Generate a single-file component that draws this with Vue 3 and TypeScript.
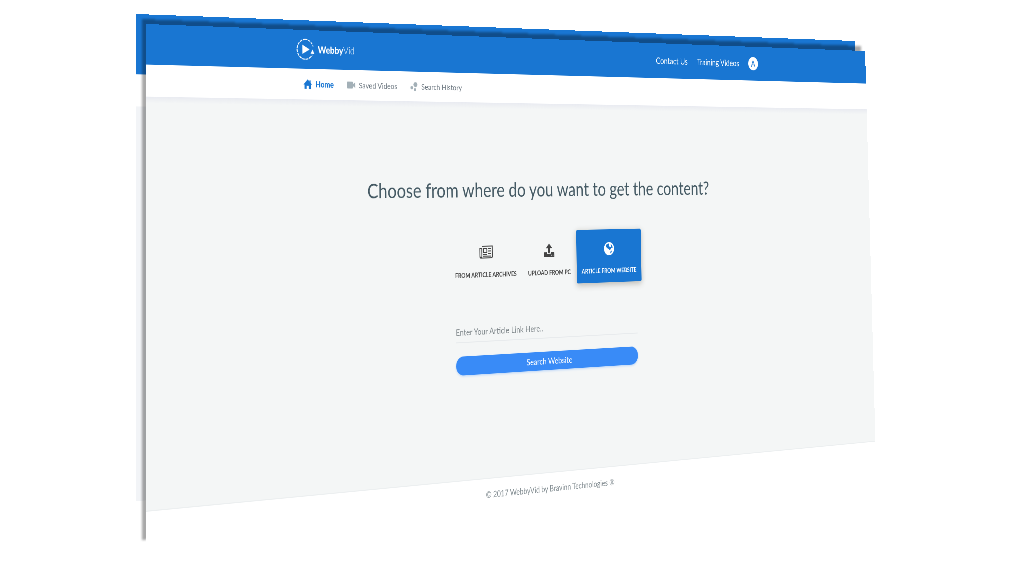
<script setup lang="ts">
import { onBeforeUnmount, onMounted, ref } from 'vue'

type Point = [number, number]

interface NavItem {
  label: string
  icon: 'home' | 'video' | 'history'
}
interface Source {
  id: 'archive' | 'upload' | 'website'
  label: string
}

const navItems: NavItem[] = [
  { label: 'Home', icon: 'home' },
  { label: 'Saved Videos', icon: 'video' },
  { label: 'Search History', icon: 'history' },
]
const sources: Source[] = [
  { id: 'archive', label: 'FROM ARTICLE ARCHIVES' },
  { id: 'upload', label: 'UPLOAD FROM PC' },
  { id: 'website', label: 'ARTICLE FROM WEBSITE' },
]
const activeSource = ref<Source['id']>('website')
const link = ref('')

// Corners of the tilted page as shares of the window: top left, top right, bottom right, bottom left.
const corners: Point[] = [
  [146 / 1024, 24 / 576],
  [865 / 1024, 51 / 576],
  [876 / 1024, 468 / 576],
  [146 / 1024, 545 / 576],
]

const stage = ref<HTMLElement | null>(null)
const page = ref<HTMLElement | null>(null)
const planeTransform = ref('none')

// Projects a w × h rectangle onto the four corner points.
function project(w: number, h: number, pts: Point[]): string {
  const [[x0, y0], [x1, y1], [x2, y2], [x3, y3]] = pts
  const dx1 = x1 - x2
  const dx2 = x3 - x2
  const dx3 = x0 - x1 + x2 - x3
  const dy1 = y1 - y2
  const dy2 = y3 - y2
  const dy3 = y0 - y1 + y2 - y3
  const den = dx1 * dy2 - dx2 * dy1
  const g = (dx3 * dy2 - dx2 * dy3) / den
  const k = (dx1 * dy3 - dx3 * dy1) / den
  const m = [
    (x1 - x0 + g * x1) / w, (y1 - y0 + g * y1) / w, 0, g / w,
    (x3 - x0 + k * x3) / h, (y3 - y0 + k * y3) / h, 0, k / h,
    0, 0, 1, 0,
    x0, y0, 0, 1,
  ]
  return `matrix3d(${m.map((n) => n.toFixed(10)).join(',')})`
}

function update() {
  if (!stage.value || !page.value) return
  const sw = stage.value.clientWidth
  const sh = stage.value.clientHeight
  const pts = corners.map(([x, y]): Point => [x * sw, y * sh])
  planeTransform.value = project(page.value.offsetWidth, page.value.offsetHeight, pts)
}

onMounted(() => {
  update()
  window.addEventListener('resize', update)
})
onBeforeUnmount(() => window.removeEventListener('resize', update))
</script>

<template>
  <div ref="stage" class="stage">
    <div class="layer layer-back" aria-hidden="true">
      <div class="plane" :style="{ transform: planeTransform }">
        <div class="back-header"></div>
        <div class="back-nav"></div>
        <div class="back-body"></div>
        <div class="back-footer"></div>
      </div>
    </div>

    <div class="layer layer-front">
      <div ref="page" class="plane" :style="{ transform: planeTransform }">
        <header class="header">
          <div class="container header-row">
            <a class="brand" href="#">
              <svg class="brand-mark" viewBox="0 0 42 42" aria-hidden="true">
                <path d="M21 1.5A19.5 19.5 0 0 0 21 40.5" fill="none" stroke="#fff" stroke-width="2.2" stroke-dasharray="6 1.6" />
                <path d="M21 1.5A19.5 19.5 0 0 1 39 15" fill="none" stroke="#fff" stroke-width="1.8" stroke-dasharray="5 2" />
                <path d="M21 40.5A19.5 19.5 0 0 0 37 31" fill="none" stroke="#fff" stroke-width="2.2" stroke-dasharray="7 2" />
                <path d="M38 21l4 9-9-1z" fill="#fff" />
                <path d="M14 12v18l17-9z" fill="#fff" />
              </svg>
              <span class="brand-name"><b>Webby</b>Vid</span>
            </a>
            <div class="account">
              <a href="#">Contact Us</a>
              <a href="#">Training Videos</a>
              <button class="avatar" type="button" aria-label="Account">A</button>
            </div>
          </div>
        </header>

        <nav class="nav">
          <div class="container nav-row">
            <a
              v-for="(item, i) in navItems"
              :key="item.label"
              href="#"
              class="nav-link"
              :class="{ active: i === 0 }"
            >
              <svg v-if="item.icon === 'home'" class="nav-icon" viewBox="0 0 24 24" aria-hidden="true">
                <path d="M12 1L0 13h3v10h6v-7h6v7h6V13h3l-4-4V3h-3v3z" fill="#1976d2" />
              </svg>
              <svg v-else-if="item.icon === 'video'" class="nav-icon" viewBox="0 0 24 24" aria-hidden="true">
                <path d="M2 4h13a2 2 0 0 1 2 2v4l7-5v14l-7-5v4a2 2 0 0 1-2 2H2a2 2 0 0 1-2-2V6a2 2 0 0 1 2-2z" fill="#a3b0b7" />
              </svg>
              <svg v-else class="nav-icon" viewBox="0 0 24 24" aria-hidden="true">
                <circle cx="16" cy="7.500" r="6" fill="#a3b0b7" />
                <circle cx="5" cy="15" r="4" fill="#a3b0b7" />
                <circle cx="14.500" cy="19.500" r="3.500" fill="#a3b0b7" />
              </svg>
              <span>{{ item.label }}</span>
            </a>
          </div>
        </nav>

        <main class="main">
          <h1 class="title">Choose from where do you want to get the content?</h1>

          <div class="sources">
            <button
              v-for="source in sources"
              :key="source.id"
              type="button"
              class="source"
              :class="{ selected: source.id === activeSource }"
              :aria-pressed="source.id === activeSource"
              @click="activeSource = source.id"
            >
              <svg v-if="source.id === 'archive'" class="source-icon wide" viewBox="0 0 36 28" aria-hidden="true">
                <path d="M7 2h27v21a3 3 0 0 1-3 3H5a3 3 0 0 1-3-3V6h5v17a2 2 0 0 1-4 0" fill="none" stroke="currentColor" stroke-width="2.200" />
                <path d="M11 7h9v8h-9z" fill="none" stroke="currentColor" stroke-width="2.200" />
                <path d="M23 7h8M23 12h8M23 17h8M10 19h10M10 22.500h21" stroke="currentColor" stroke-width="1.800" />
              </svg>
              <svg v-else-if="source.id === 'upload'" class="source-icon" viewBox="0 0 28 28" aria-hidden="true">
                <path d="M14 0l8.500 9.500H17V19h-6V9.500H5.500z" fill="currentColor" />
                <path d="M1 18h8v3h10v-3h8a1 1 0 0 1 1 1v8a1 1 0 0 1-1 1H1a1 1 0 0 1-1-1v-8a1 1 0 0 1 1-1z" fill="currentColor" />
                <circle cx="20.500" cy="24.500" r="0.900" fill="#f4f6f6" />
                <circle cx="24.500" cy="24.500" r="0.900" fill="#f4f6f6" />
              </svg>
              <svg v-else class="source-icon" viewBox="0 0 28 28" aria-hidden="true">
                <circle cx="14" cy="14" r="14" fill="currentColor" />
                <path d="M7 5l6-2 2 3-2 2 3 2 4 1-1 4-4 2-3-3-3-1-4-4z" fill="#1976d2" />
                <path d="M20 5l3 3 1 4-3 1-2-2 1-3-2-2zM18 20l4-2-2 5-3 1z" fill="#1976d2" />
              </svg>
              <span>{{ source.label }}</span>
            </button>
          </div>

          <form class="search" @submit.prevent>
            <input v-model="link" type="text" aria-label="Article link" placeholder="Enter Your Article Link Here.." />
            <button type="submit">Search Website</button>
          </form>
        </main>

        <footer class="footer">© 2017 WebbyVid by Bravinn Technologies ®</footer>
      </div>
    </div>
  </div>
</template>

<style>
html,
body {
  margin: 0;
  background: #fff;
}
</style>

<style scoped>
.stage {
  position: relative;
  height: 100vh;
  overflow: hidden;
  background: #fff;
  font-family: Lato, 'Open Sans', sans-serif;
}
.layer {
  position: absolute;
  inset: 0;
}
.layer-back {
  inset: -10px 10px 10px -10px;
}
.layer-front {
  filter: drop-shadow(-4px -5px 1px rgba(0, 0, 0, 0.34));
}
.plane {
  position: absolute;
  top: 0;
  left: 0;
  box-sizing: border-box;
  display: flex;
  flex-direction: column;
  width: 187.5vw;
  min-height: 960px;
  background: #fff;
  transform-origin: 0 0;
}
.back-header {
  height: 113px;
  background: #1976d2;
}
.back-nav {
  height: 60px;
}
.back-body {
  flex: 1;
  background: #f2f4f7;
}
.back-footer {
  height: 61px;
}
.container {
  box-sizing: border-box;
  width: 65%;
  margin: 0 auto;
}
.header {
  background: #1976d2;
}
.header-row {
  display: flex;
  align-items: center;
  justify-content: space-between;
  height: 76px;
}
.brand {
  display: flex;
  align-items: center;
  gap: 8px;
  color: #fff;
  text-decoration: none;
}
.brand-mark {
  width: 42px;
  height: 42px;
}
.brand-name {
  font-size: 19px;
  line-height: 24px;
  font-weight: 300;
}
.brand-name b {
  font-weight: 900;
}
.account {
  display: flex;
  align-items: center;
  gap: 28px;
  padding-right: 9px;
}
.account a {
  color: #fff;
  font-size: 19px;
  line-height: 24px;
  text-decoration: none;
}
.avatar {
  width: 30px;
  height: 30px;
  padding: 0;
  border: 0;
  border-radius: 50%;
  background: #fff;
  color: #1976d2;
  font: 19px/30px Lato, sans-serif;
}
.nav {
  background: #fff;
}
.nav-row {
  display: flex;
  align-items: center;
  gap: 32px;
  height: 60px;
  padding-left: 16px;
}
.nav-link {
  display: flex;
  align-items: center;
  gap: 8px;
  color: #6c7780;
  font-size: 16px;
  line-height: 20px;
  text-decoration: none;
}
.nav-link.active {
  color: #1976d2;
  font-weight: 900;
}
.nav-icon {
  width: 20px;
  height: 20px;
}
.main {
  flex: 1;
  display: flex;
  flex-direction: column;
  align-items: center;
  padding-top: 155px;
  border-bottom: 2px solid #eceff0;
  background: linear-gradient(#e9ebf1, #f4f6f6 12px);
}
.title {
  margin: 0;
  color: #455a64;
  font-size: 40px;
  line-height: 48px;
  font-weight: 400;
}
.sources {
  display: flex;
  gap: 2px;
  margin-top: 62px;
}
.source {
  display: flex;
  flex-direction: column;
  align-items: center;
  gap: 22px;
  height: 112px;
  padding: 27px 14px 0;
  border: 0;
  border-radius: 4px;
  background: transparent;
  color: #444;
  font: 700 13px/20px Lato, sans-serif;
}
.source.selected {
  background: #1976d2;
  color: #fff;
  box-shadow: 0 4px 14px rgba(60, 50, 30, 0.32);
}
.source-icon {
  width: 28px;
  height: 28px;
}
.source-icon.wide {
  width: 36px;
}
.search {
  display: flex;
  flex-direction: column;
  gap: 27px;
  width: 486px;
  margin-top: 67px;
}
.search input {
  box-sizing: border-box;
  height: 44px;
  padding: 2px 0 0;
  border: 0;
  border-bottom: 2px solid #e8ebed;
  outline: 0;
  background: transparent;
  color: #555;
  font: 18px/24px Lato, sans-serif;
}
.search input::placeholder {
  color: #7d8589;
  opacity: 1;
}
.search button {
  height: 38px;
  padding: 0;
  border: 0;
  border-radius: 20px;
  background: #398bf7;
  box-shadow: 0 2px 4px rgba(57, 139, 247, 0.3);
  color: #fff;
  font: 18px/24px Lato, sans-serif;
}
.footer {
  box-sizing: border-box;
  height: 60px;
  padding-top: 20px;
  color: #838d92;
  font-size: 17px;
  line-height: 24px;
  text-align: center;
}
</style>
